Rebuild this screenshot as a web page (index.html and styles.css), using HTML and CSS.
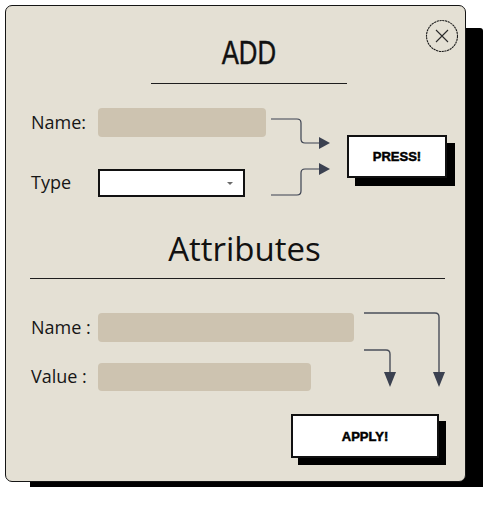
FILE: index.html
```html
<!DOCTYPE html>
<html>
<head>
<meta charset="utf-8">
<link rel="stylesheet" href="styles.css">
</head>
<body>
<div class="panel">
  <button class="close" aria-label="Close">
    <svg width="34" height="34" viewBox="0 0 34 34"><circle cx="17" cy="17" r="15.5" fill="none" stroke="#1c1c1c" stroke-width="1.1" stroke-dasharray="2.2 0.6"/><path d="M11 11 L23 23 M23 11 L11 23" stroke="#2a2a2a" stroke-width="1.1" fill="none"/></svg>
  </button>

  <h1 class="title-add"><span>ADD</span></h1>
  <div class="rule-add"></div>

  <div class="top-form">
    <div class="fields">
      <label class="lbl">Name:</label>
      <div class="input w168"></div>
      <label class="lbl">Type</label>
      <div class="select"><span class="caret"></span></div>
    </div>
    <svg class="conn-top" width="60" height="88" viewBox="0 0 60 88">
      <path d="M0 11 H26 Q30 11 30 15 V31 Q30 35 34 35 H49" fill="none" stroke="#3b4150" stroke-width="1.2"/>
      <polygon points="48,29 59,35 48,41" fill="#3b4150"/>
      <path d="M0 87 H26 Q30 87 30 83 V65 Q30 61 34 61 H49" fill="none" stroke="#3b4150" stroke-width="1.2"/>
      <polygon points="48,55 59,61 48,67" fill="#3b4150"/>
    </svg>
    <button class="btn btn-press">PRESS!</button>
  </div>

  <h2 class="title-attr">Attributes</h2>
  <div class="rule-attr"></div>

  <div class="attr-form">
    <div class="fields attr-fields">
      <label class="lbl">Name :</label>
      <div class="input w256"></div>
      <label class="lbl">Value :</label>
      <div class="input w213"></div>
    </div>
    <svg class="conn-attr" width="86" height="78" viewBox="0 0 86 78">
      <path d="M2 2 H73 Q77 2 77 6 V62" fill="none" stroke="#4a4f5a" stroke-width="1.4"/>
      <polygon points="71,61 83,61 77,76" fill="#3b4150"/>
      <path d="M2 39 H24 Q28 39 28 43 V62" fill="none" stroke="#4a4f5a" stroke-width="1.4"/>
      <polygon points="22,61 34,61 28,76" fill="#3b4150"/>
    </svg>
  </div>

  <div class="apply-row">
    <button class="btn btn-apply">APPLY!</button>
  </div>
</div>
</body>
</html>
```

FILE: styles.css
```css
html, body {
  margin: 0;
  padding: 0;
  background: #ffffff;
}

body {
  font-family: "Open Sans", "Noto Sans", sans-serif;
  color: #141414;
}

.panel {
  position: relative;
  box-sizing: border-box;
  width: 461px;
  height: 477px;
  margin: 5px;
  background: #e4e0d4;
  border: 1px solid #151515;
  border-radius: 7px;
  box-shadow: 21px 19px 0 -4px #000;
  display: flex;
  flex-direction: column;
}

.close {
  position: absolute;
  top: 13px;
  right: 6px;
  width: 34px;
  height: 34px;
  padding: 0;
  border: none;
  background: transparent;
  display: block;
}
.close svg { display: block; }

.title-add {
  margin: 29px 0 0 27px;
  font-family: "Liberation Sans", Arial, sans-serif;
  font-weight: normal;
  font-size: 33px;
  line-height: 36px;
  text-align: center;
  color: #111;
}
.title-add span {
  display: inline-block;
  transform: scaleX(0.78);
  -webkit-text-stroke: 0.4px #111;
}

.rule-add {
  margin: 12px 0 0 145px;
  width: 196px;
  height: 1px;
  background: #1e1e1e;
}

.top-form {
  margin-top: 24px;
  padding-left: 25px;
  display: flex;
  align-items: flex-start;
}

.fields {
  display: grid;
  grid-template-columns: 67px auto;
  row-gap: 31px;
  align-items: center;
}

.lbl {
  font-size: 18px;
  line-height: 29px;
  color: #161616;
}

.input {
  height: 29px;
  background: #cdc3b0;
  border-radius: 4px;
}
.w168 { width: 168px; }
.w256 { width: 256px; }
.w213 { width: 213px; }

.select {
  position: relative;
  box-sizing: border-box;
  width: 147px;
  height: 28px;
  background: #fff;
  border: 2px solid #111;
}
.caret {
  position: absolute;
  right: 10px;
  top: 11px;
  width: 0;
  height: 0;
  border-left: 3px solid transparent;
  border-right: 3px solid transparent;
  border-top: 3px solid #6a6a6a;
}

.conn-top {
  display: block;
  margin-left: 5px;
}

.btn {
  box-sizing: border-box;
  background: #fff;
  border: 2px solid #111;
  font-family: "Liberation Sans", Arial, sans-serif;
  font-weight: bold;
  font-size: 13px;
  color: #000;
  -webkit-text-stroke: 0.5px #000;
  padding: 0;
  box-shadow: 8px 8px 0 #000;
}

.btn-press {
  margin: 27px 0 0 16px;
  width: 100px;
  height: 43px;
}

.title-attr {
  margin: 32px 0 0 18px;
  font-weight: normal;
  font-size: 33px;
  line-height: 40px;
  text-align: center;
  color: #111;
}

.rule-attr {
  margin: 9px 0 0 24px;
  width: 415px;
  height: 1px;
  background: #1e1e1e;
}

.attr-form {
  margin-top: 34px;
  padding-left: 25px;
  display: flex;
  align-items: flex-start;
}

.attr-fields {
  row-gap: 20px;
}
.attr-fields .input:last-child { height: 28px; }

.conn-attr {
  display: block;
  margin: -2px 0 0 8px;
}

.apply-row {
  margin-top: 23px;
  padding-right: 26px;
  display: flex;
  justify-content: flex-end;
}

.btn-apply {
  width: 148px;
  height: 44px;
  box-shadow: 7px 7px 0 #000;
}
```
